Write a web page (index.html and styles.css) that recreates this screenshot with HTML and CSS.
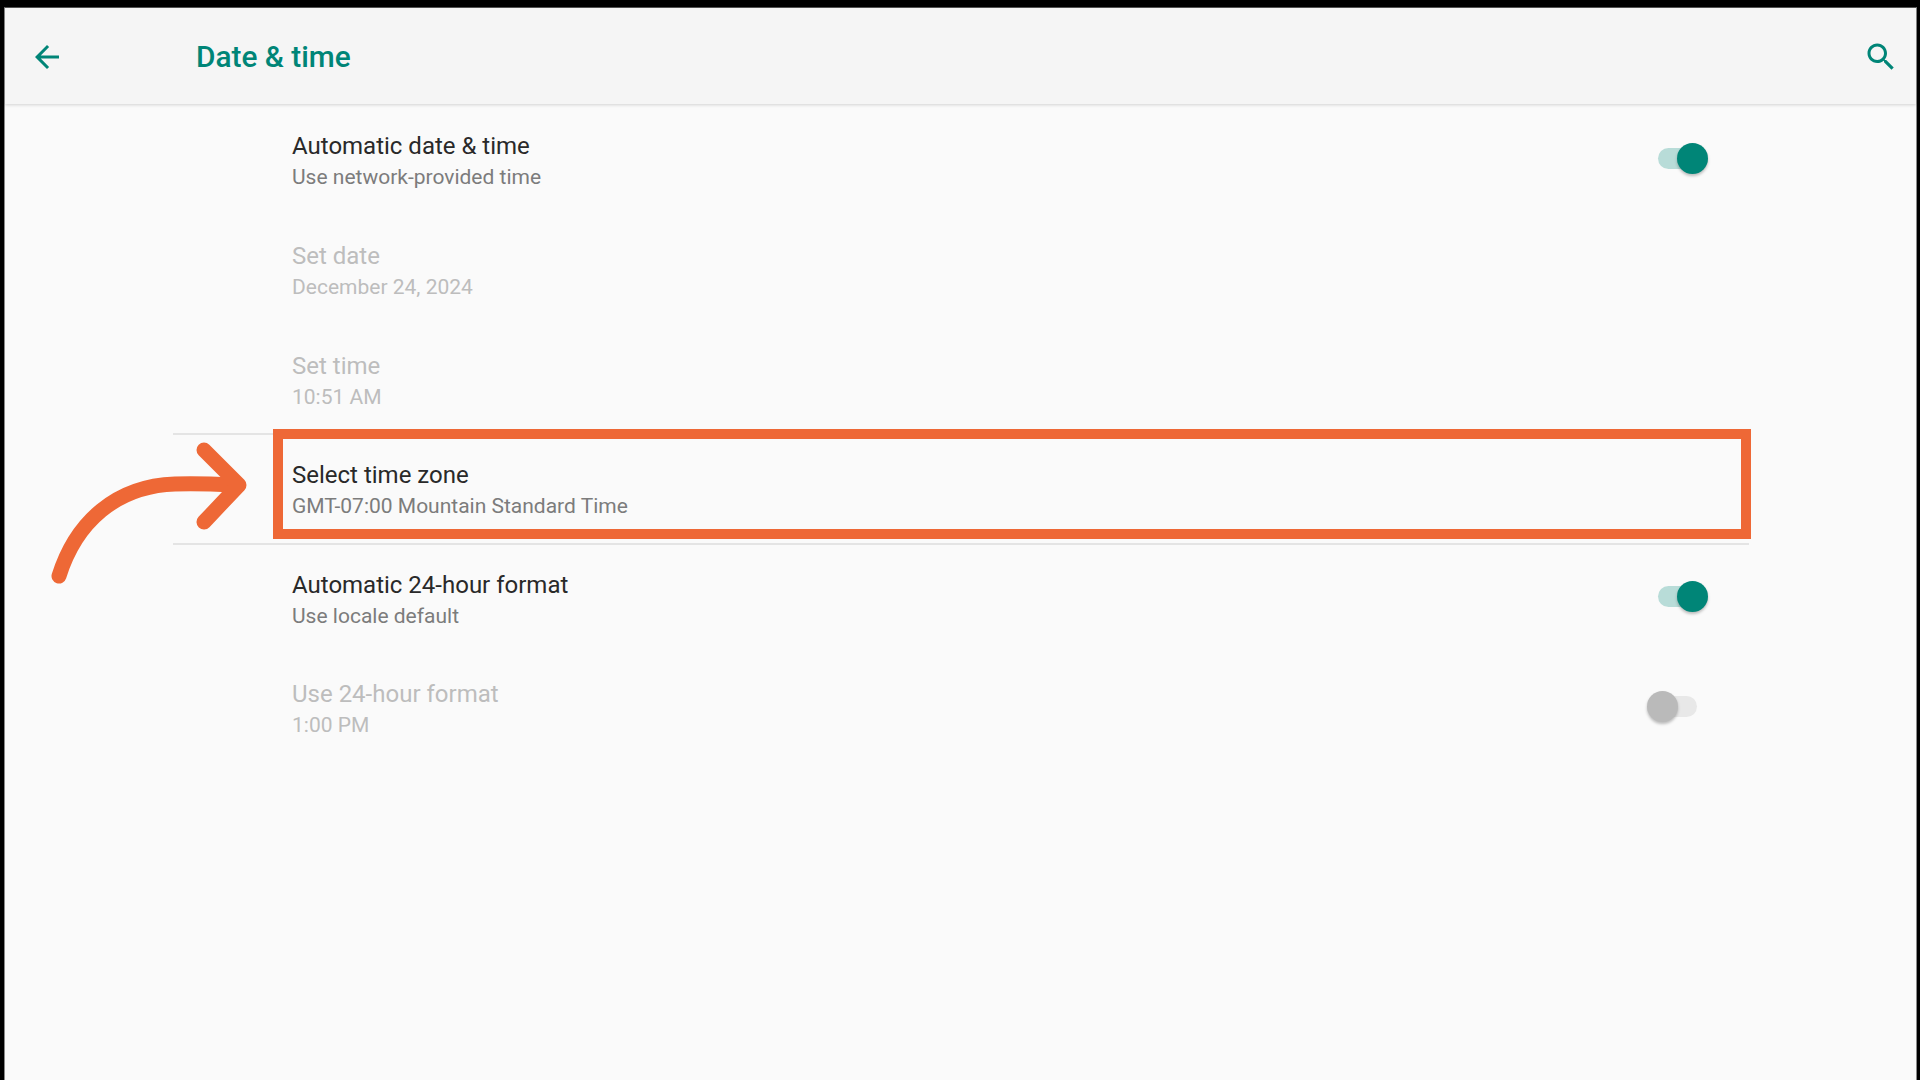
FILE: index.html
```html
<!DOCTYPE html>
<html lang="en">

<head>
    <meta charset="UTF-8">
    <title>Date &amp; time</title>
    <link rel="stylesheet" href="styles.css">
</head>

<body>
    <div class="screen">
        <header class="app-bar">
            <svg class="back-icon" viewBox="0 0 24 24"><path d="M20 11H7.83l5.59-5.59L12 4l-8 8 8 8 1.41-1.41L7.83 13H20v-2z"/></svg>
            <h1 class="app-title">Date &amp; time</h1>
            <svg class="search-icon" viewBox="0 0 24 24"><path d="M15.5 14h-.79l-.28-.27C15.41 12.59 16 11.11 16 9.5 16 5.91 13.09 3 9.5 3S3 5.91 3 9.5 5.91 16 9.5 16c1.61 0 3.09-.59 4.23-1.57l.27.28v.79l5 4.99L20.49 19l-4.99-5zm-6 0C7.01 14 5 11.99 5 9.5S7.01 5 9.5 5 14 7.01 14 9.5 11.99 14 9.5 14z"/></svg>
        </header>

        <div class="settings-list">
            <div class="row">
                <div class="row-text">
                    <div class="row-title">Automatic date &amp; time</div>
                    <div class="row-sub">Use network-provided time</div>
                </div>
                <div class="switch switch-on"><span class="thumb"></span></div>
            </div>
            <div class="row disabled">
                <div class="row-text">
                    <div class="row-title">Set date</div>
                    <div class="row-sub">December 24, 2024</div>
                </div>
            </div>
            <div class="row disabled">
                <div class="row-text">
                    <div class="row-title">Set time</div>
                    <div class="row-sub">10:51 AM</div>
                </div>
            </div>
            <div class="row divided">
                <div class="row-text">
                    <div class="row-title">Select time zone</div>
                    <div class="row-sub">GMT-07:00 Mountain Standard Time</div>
                </div>
            </div>
            <div class="row">
                <div class="row-text">
                    <div class="row-title">Automatic 24-hour format</div>
                    <div class="row-sub">Use locale default</div>
                </div>
                <div class="switch switch-on"><span class="thumb"></span></div>
            </div>
            <div class="row disabled">
                <div class="row-text">
                    <div class="row-title">Use 24-hour format</div>
                    <div class="row-sub">1:00 PM</div>
                </div>
                <div class="switch switch-off"><span class="thumb"></span></div>
            </div>
        </div>
    </div>

    <div class="highlight-box"></div>
    <svg class="callout-arrow" viewBox="0 0 260 160" fill="none">
        <path d="M9 134C26 80 66 44 125 42C145 41 165 42 185 43"/>
        <path d="M154 8L189 43L154 80" stroke-linejoin="round"/>
    </svg>
</body>

</html>
```

FILE: styles.css
```css
html,
body {
    margin: 0;
    height: 100%;
    overflow: hidden;
}

body {
    background-color: #000;
    font-family: Roboto, sans-serif;
}

.screen {
    margin: 7px 3px 0 4px;
    height: 1073px;
    box-sizing: border-box;
    background-color: #fafafa;
    border: 1px solid #8a8a8a;
    border-top-color: #555;
    border-bottom: none;
}

.app-bar {
    position: relative;
    display: flex;
    align-items: center;
    box-sizing: border-box;
    height: 96px;
    padding-top: 1px;
    background-color: #f5f5f5;
    box-shadow: 0 1px 3px rgba(0, 0, 0, 0.16);
}

.back-icon,
.search-icon {
    width: 36px;
    height: 36px;
    fill: #008577;
    flex-shrink: 0;
}

.back-icon {
    margin-left: 24px;
}

.app-title {
    margin: 0 0 0 131px;
    flex: 1;
    font-size: 29.8px;
    font-weight: 500;
    color: #008577;
}

.search-icon {
    margin-right: 17px;
}

.settings-list {
    margin-left: 167.5px;
    width: 1576.5px;
    padding-top: 0.6px;
}

.row {
    display: flex;
    align-items: center;
    justify-content: space-between;
    box-sizing: border-box;
    height: 109.6px;
    padding: 0 41px 0 119.5px;
}

.divided {
    height: 111.6px;
    margin-bottom: -2px;
    padding-bottom: 2px;
    border-top: 2px solid #e4e4e4;
    border-bottom: 2px solid #e4e4e4;
}

.row-text {
    padding-top: 3px;
}

.row-title {
    font-size: 24px;
    line-height: 32px;
    color: #292929;
}

.row-sub {
    margin-top: 1px;
    font-size: 21px;
    line-height: 28px;
    color: #7c7c7c;
}

.disabled .row-title,
.disabled .row-sub {
    color: #bdbdbd;
}

.switch {
    position: relative;
    width: 42px;
    height: 21px;
    margin-bottom: 2px;
    border-radius: 11px;
}

.switch-on {
    margin-right: 8px;
    background-color: #b8dcd8;
}

.switch-off {
    margin-right: 11px;
    background-color: #e8e8e8;
}

.thumb {
    position: absolute;
    top: -5px;
    width: 31px;
    height: 31px;
    border-radius: 50%;
    box-shadow: 0 2px 3px rgba(0, 0, 0, 0.25);
}

.switch-on .thumb {
    right: -8px;
    background-color: #008577;
}

.switch-off .thumb {
    left: -8px;
    background-color: #bababa;
}

.highlight-box {
    position: absolute;
    left: 273px;
    top: 429px;
    width: 1478px;
    height: 110px;
    box-sizing: border-box;
    border: 10px solid #ee6836;
}

.callout-arrow {
    position: absolute;
    left: 50px;
    top: 442px;
    width: 260px;
    height: 160px;
    stroke: #ee6836;
    stroke-width: 15;
    stroke-linecap: round;
}
```
